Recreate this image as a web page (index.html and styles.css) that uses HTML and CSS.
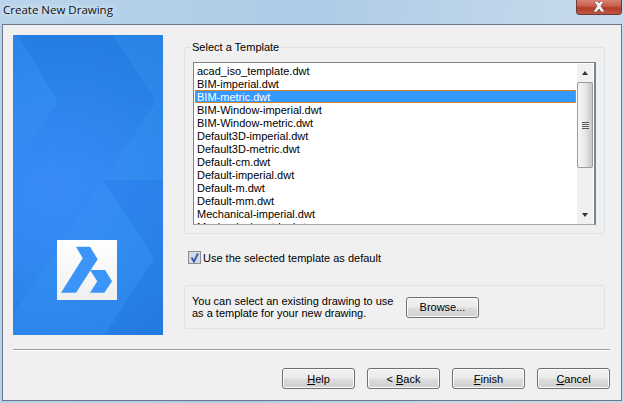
FILE: index.html
```html
<!DOCTYPE html>
<html lang="en">
<head>
  <meta charset="UTF-8">
  <title>Create New Drawing</title>
  <link rel="stylesheet" href="styles.css">
</head>
<body>

  <header class="titlebar">
    <span class="title">Create New Drawing</span>
    <button class="close-btn" aria-label="Close">
      <svg width="14" height="10" viewBox="0 0 14 10"><path d="M1 -2 H5 L7 1 L9 -2 H13 L9 4 L13 10 H9 L7 7 L5 10 H1 L5 4 Z" fill="#f4f4f4" stroke="#6e4a48" stroke-width="0.8"/></svg>
    </button>
  </header>

  <div class="dialog">
    <div class="main-row">
      <aside class="side-panel">
        <svg class="side-art" width="150" height="300" viewBox="0 0 150 300">
          <defs>
            <radialGradient id="sideBg" gradientUnits="userSpaceOnUse" cx="40" cy="150" r="190">
              <stop offset="0" stop-color="#3a8bfa"/>
              <stop offset="0.5" stop-color="#2f87ee"/>
              <stop offset="1" stop-color="#237ce0"/>
            </radialGradient>
            <linearGradient id="topShade" x1="0" y1="0" x2="0" y2="1">
              <stop offset="0" stop-color="#1f76d8" stop-opacity="0.35"/>
              <stop offset="1" stop-color="#1f76d8" stop-opacity="0"/>
            </linearGradient>
          </defs>
          <rect width="150" height="300" fill="url(#sideBg)"/>
          <path d="M5 0 H100 L143 67 L90 145 H0 V130 L45 67 Z" fill="url(#topShade)"/>
          <path d="M0 0 H5 L45 67 L0 130 Z" fill="#3a96f0" opacity="0.2"/>
          <path d="M100 0 H150 V145 H90 L143 67 Z" fill="#3a96ee" opacity="0.22"/>
          <path d="M90 145 L141 223 L92 300 H0 V280 Z" fill="#3a96f2" opacity="0.25"/>
          <path d="M90 145 H150 V300 H92 L141 223 Z" fill="#1f74e0" opacity="0.2"/>
        </svg>
        <div class="logo-box">
          <svg width="60" height="60" viewBox="0 0 60 60">
            <path d="M19 6.7 H33 L40.7 19.3 L19 52.7 H4 L25.7 18.3 Z" fill="#3b94f7"/>
            <path d="M33 30 H48 L55 41.3 L47.3 52.7 H33 L40.3 41.3 Z" fill="#3b94f7"/>
          </svg>
        </div>
      </aside>

      <div class="right-col">
        <fieldset class="template-group">
          <legend>Select a Template</legend>
          <div class="listbox">
            <ul class="file-list">
              <li>acad_iso_template.dwt</li>
              <li>BIM-imperial.dwt</li>
              <li class="selected">BIM-metric.dwt</li>
              <li>BIM-Window-imperial.dwt</li>
              <li>BIM-Window-metric.dwt</li>
              <li>Default3D-imperial.dwt</li>
              <li>Default3D-metric.dwt</li>
              <li>Default-cm.dwt</li>
              <li>Default-imperial.dwt</li>
              <li>Default-m.dwt</li>
              <li>Default-mm.dwt</li>
              <li>Mechanical-imperial.dwt</li>
              <li>Mechanical-metric.dwt</li>
            </ul>
            <div class="scrollbar">
              <div class="arrow"><span class="tri-up"></span></div>
              <div class="thumb"><span class="grip"></span></div>
              <div class="track"></div>
              <div class="arrow"><span class="tri-down"></span></div>
            </div>
          </div>
        </fieldset>

        <label class="default-check">
          <span class="checkbox">
            <svg width="11" height="11" viewBox="0 0 11 11"><path d="M2.5 5.5 L5 9.5 L9 1.5" fill="none" stroke="#3f5fae" stroke-width="2"/></svg>
          </span>
          Use the selected template as default
        </label>

        <div class="info-box">
          <p>You can select an existing drawing to use<br>as a template for your new drawing.</p>
          <button class="btn">Browse...</button>
        </div>
      </div>
    </div>

    <hr class="separator">

    <div class="btn-row">
      <button class="btn"><u>H</u>elp</button>
      <button class="btn">&lt; <u>B</u>ack</button>
      <button class="btn"><u>F</u>inish</button>
      <button class="btn"><u>C</u>ancel</button>
    </div>
  </div>

</body>
</html>
```

FILE: styles.css
```css
* { margin: 0; padding: 0; box-sizing: border-box; }
html, body { width: 624px; height: 403px; overflow: hidden; }
body {
  background: linear-gradient(100deg, #b9d3ea 0%, #aecbe7 45%, #c3d8ea 80%, #c9dbea 100%);
  font-family: "Liberation Sans", Arial, sans-serif;
  font-size: 11px;
  color: #000;
  position: relative;
}

/* Title bar */
.titlebar { height: 24px; }
.title {
  display: inline-block;
  margin: 1px 0 0 3px;
  font-family: "Open Sans", sans-serif;
  font-size: 11.5px;
  line-height: 17px;
  color: #111;
  text-shadow: 0 0 6px #e6f0f8, 0 0 6px #e6f0f8;
}
.close-btn {
  position: absolute;
  top: -2px;
  left: 576px;
  width: 46px;
  height: 17px;
  border: 1px solid #6e3b3b;
  border-radius: 0 0 3px 3px;
  background: linear-gradient(#d98a78 0%, #c9604c 45%, #b13c28 60%, #c25442 100%);
  overflow: hidden;
}
.close-btn svg { display: block; margin: 1px 0 0 15px; }

/* Dialog body */
.dialog {
  margin-left: 2px;
  width: 620px;
  height: 377px;
  border: 1px solid #6c7886;
  background: #f0f0f0;
  padding: 10px 10px 0 10px;
}
.main-row { display: flex; height: 300px; }

.side-panel {
  width: 150px;
  height: 300px;
  position: relative;
  flex-shrink: 0;
}
.side-art { display: block; }
.logo-box {
  position: absolute;
  left: 44px;
  top: 205px;
  width: 60px;
  height: 60px;
  background: linear-gradient(#ffffff, #efefef);
}
.logo-box svg { display: block; }

.right-col {
  margin-left: 21px;
  width: 421px;
  padding-top: 6px;
}

/* Template group */
.template-group {
  border: 1px solid #dce2e8;
  border-radius: 3px;
  height: 193px;
  padding: 8px 8px 0 8px;
}
.template-group legend {
  margin-left: -2px;
  padding: 0 1px;
  line-height: 13px;
}
.listbox {
  display: flex;
  height: 163px;
  background: #fff;
  border: 1px solid #7a848c;
  border-right-width: 2px;
  border-bottom-color: #a0a8b0;
  padding: 1px 1px 0 1px;
  overflow: hidden;
}
.file-list { list-style: none; flex: 1; height: 161px; overflow: hidden; }
.file-list li {
  height: 13px;
  line-height: 15px;
  padding-left: 2px;
  white-space: nowrap;
}
.file-list li.selected {
  background: #3399ff;
  color: #fff;
  border: 1px solid #d9821f;
  line-height: 13px;
  padding-left: 1px;
}

/* Scrollbar */
.scrollbar {
  width: 16px;
  height: 160px;
  margin-left: 1px;
  display: flex;
  flex-direction: column;
  background: #f0f0f0;
}
.arrow {
  height: 18px;
  flex-shrink: 0;
  display: flex;
  align-items: center;
  justify-content: center;
}
.tri-up, .tri-down { width: 0; height: 0; border-left: 3.5px solid transparent; border-right: 3.5px solid transparent; }
.tri-up { border-bottom: 4px solid #333; }
.tri-down { border-top: 4px solid #333; }
.thumb {
  height: 86px;
  flex-shrink: 0;
  border: 1px solid #9a9a9a;
  border-radius: 2px;
  background: linear-gradient(90deg, #f6f6f6, #e8e8e8 50%, #c6c6c6);
  display: flex;
  align-items: center;
  justify-content: center;
}
.grip {
  width: 7px;
  height: 7px;
  background: repeating-linear-gradient(#555 0 1px, #eee 1px 2px);
}
.track { flex: 1; }

/* Checkbox */
.default-check {
  display: flex;
  align-items: center;
  gap: 2px;
  margin: 17px 0 0 4px;
  height: 13px;
}
.checkbox {
  width: 13px;
  height: 13px;
  border: 1px solid #8e8f8f;
  background: #d4dae6;
  display: flex;
  align-items: center;
  justify-content: center;
}
.checkbox svg { display: block; }

/* Info box */
.info-box {
  margin-top: 21px;
  height: 44px;
  border: 1px solid #dce2e8;
  border-radius: 3px;
  padding: 0 0 0 7px;
  display: flex;
  align-items: center;
}
.info-box p { width: 214px; line-height: 12.5px; white-space: nowrap; }

/* Buttons */
.btn {
  width: 73px;
  height: 21px;
  border: 1px solid #707070;
  border-radius: 3px;
  background: linear-gradient(#f2f2f2 0%, #ebebeb 48%, #dddddd 52%, #cfcfcf 100%);
  box-shadow: inset 0 0 0 1px #fbfbfb;
  font: inherit;
  color: #000;
  flex-shrink: 0;
}

.separator {
  border: 0;
  border-top: 1px solid #a0a0a0;
  border-bottom: 1px solid #fff;
  height: 2px;
  margin-top: 14px;
  width: 597px;
}
.btn-row {
  display: flex;
  justify-content: flex-end;
  gap: 12px;
  margin: 17px 1px 0 0;
}
```
